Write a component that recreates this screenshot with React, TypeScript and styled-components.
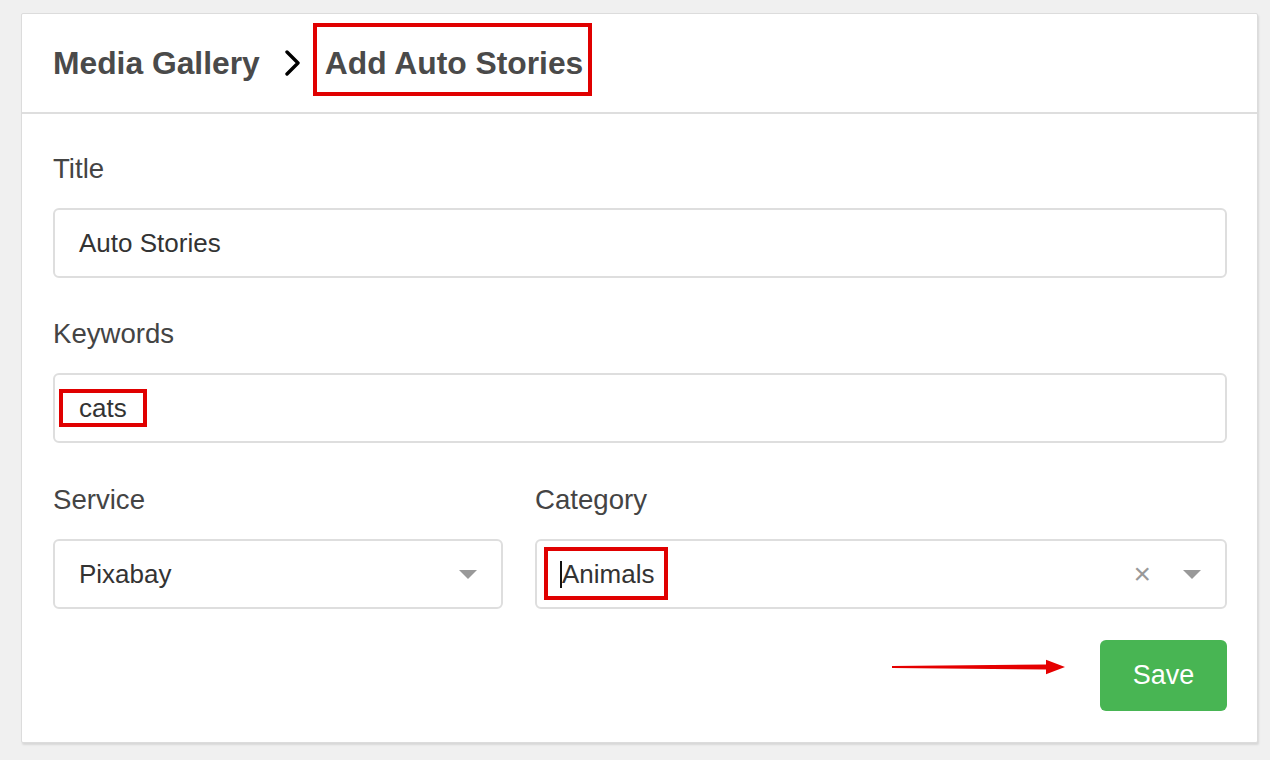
import React from 'react';
import styled, {createGlobalStyle} from "styled-components";

const GlobalStyle = createGlobalStyle`
  html, body {
    margin: 0;
    padding: 0;
    background: #f0f0f0;
    font-family: "Liberation Sans", Arial, Helvetica, sans-serif;
  }
`

const App = () => {
    return (
        <>
            <GlobalStyle/>
            <Page>
                <Card>
                    <Header>
                        <Crumb>Media Gallery</Crumb>
                        <Chevron viewBox="0 0 16 26">
                            <polyline points="2,2 13,13 2,24" fill="none" stroke="#000" strokeWidth="3.4"
                                      strokeLinecap="round" strokeLinejoin="round"/>
                        </Chevron>
                        <CrumbMarked>Add Auto Stories</CrumbMarked>
                    </Header>
                    <Body>
                        <Group>
                            <Label>Title</Label>
                            <Field>Auto Stories</Field>
                        </Group>
                        <Group>
                            <Label>Keywords</Label>
                            <Field>
                                <KeywordMark>cats</KeywordMark>
                            </Field>
                        </Group>
                        <Row>
                            <Group>
                                <Label>Service</Label>
                                <Field>
                                    <FieldText>Pixabay</FieldText>
                                    <Caret/>
                                </Field>
                            </Group>
                            <Group>
                                <Label>Category</Label>
                                <Field>
                                    <FieldText>
                                        <CategoryMark><Cursor/>Animals</CategoryMark>
                                    </FieldText>
                                    <Clear>×</Clear>
                                    <Caret/>
                                </Field>
                            </Group>
                        </Row>
                        <Footer>
                            <Arrow viewBox="0 0 174 20">
                                <polygon points="0,8 154,6.6 154,1.8 173,9 154,16.2 154,11.4 0,10" fill="#e50000"/>
                            </Arrow>
                            <SaveButton>Save</SaveButton>
                        </Footer>
                    </Body>
                </Card>
            </Page>
        </>
    );
};

export default App;

// ---------------------------
const Page = styled.div`
  padding: 13px 12px 17px 21px;
`

const Card = styled.div`
  width: 1237px;
  box-sizing: border-box;
  background: #fff;
  border: 1px solid #dcdcdc;
  border-radius: 2px;
  box-shadow: 1px 2px 2px rgba(0, 0, 0, 0.1);
`

const Header = styled.div`
  display: flex;
  align-items: center;
  height: 98px;
  padding: 0 31px;
  border-bottom: 2px solid #dedede;
  color: #4a4a4a;
  font-size: 31.8px;
  font-weight: 700;
  line-height: 36px;
`

const Crumb = styled.span`
  display: inline-block;
`

const Chevron = styled.svg`
  width: 16px;
  height: 26px;
  margin: 0 12px 0 25px;
  flex-shrink: 0;
`

const CrumbMarked = styled.span`
  display: inline-block;
  padding: 18px 5px 11px 8px;
  margin: -22px 0 -15px 0;
  border: 4px solid #e00000;
`

const Body = styled.div`
  padding: 40px 30px 31px 31px;
`

const Group = styled.div`
  display: flex;
  flex-direction: column;
  margin-bottom: 41px;
  min-width: 0;
`

const Row = styled.div`
  display: grid;
  grid-template-columns: 450px 1fr;
  column-gap: 32px;
  padding-top: 1px;

  ${Group} {
    margin-bottom: 0;
  }
`

const Label = styled.div`
  font-size: 27.6px;
  line-height: 30px;
  color: #444;
  margin-bottom: 24px;
`

const Field = styled.div`
  display: flex;
  align-items: center;
  height: 70px;
  box-sizing: border-box;
  padding: 0 24px;
  border: 2px solid #dedede;
  border-radius: 6px;
  font-size: 26px;
  line-height: 30px;
  color: #333;
`

const FieldText = styled.div`
  flex: 1;
  display: flex;
  align-items: center;
`

const KeywordMark = styled.span`
  display: inline-block;
  padding: 0 16px;
  margin: -4px 0 -4px -20px;
  border: 4px solid #e00000;
`

const CategoryMark = styled.span`
  display: inline-flex;
  align-items: center;
  padding: 8px 10px 7px 12px;
  margin: -12px 0 -11px -17px;
  border: 4px solid #e00000;
`

const Cursor = styled.span`
  display: inline-block;
  width: 1.5px;
  height: 27px;
  background: #111;
  margin-right: 0.5px;
`

const Caret = styled.span`
  width: 0;
  height: 0;
  border-left: 9px solid transparent;
  border-right: 9px solid transparent;
  border-top: 9px solid #999;
  margin-left: auto;
`

const Clear = styled.span`
  color: #999;
  font-size: 30px;
  line-height: 30px;
  margin-right: 32px;
`

const Footer = styled.div`
  display: flex;
  justify-content: flex-end;
  align-items: center;
  margin-top: 31px;
`

const Arrow = styled.svg`
  width: 174px;
  height: 20px;
  margin-right: 34px;
  margin-top: -16px;
`

const SaveButton = styled.button`
  width: 127px;
  height: 71px;
  border: none;
  border-radius: 6px;
  background: #48b553;
  color: #fff;
  font-family: "Liberation Sans", Arial, sans-serif;
  font-size: 27px;
  cursor: pointer;
`
